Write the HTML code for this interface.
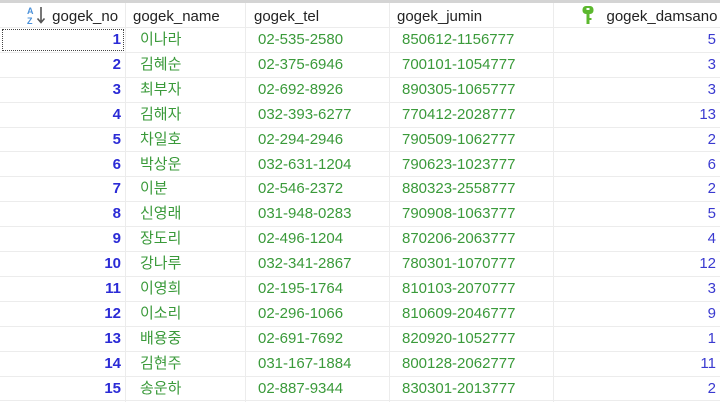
<!DOCTYPE html>
<html><head><meta charset="utf-8"><style>
*{margin:0;padding:0;box-sizing:border-box}
body{width:720px;height:402px;overflow:hidden;background:#fff;font-family:"Liberation Sans","Noto Sans CJK KR",sans-serif;font-size:15px;position:relative}
.top{position:absolute;left:0;top:0;width:720px;height:3px;background:#d4d4d4}
.hd{position:absolute;top:3px;height:25px;line-height:27px;color:#222;font-size:15px}
.vl{position:absolute;top:3px;width:1px;height:399px;background:#ececec}
.row{position:absolute;left:0;width:720px;height:24.9px;border-bottom:1px solid #ececec}
.c{position:absolute;top:0;line-height:24px;white-space:nowrap}
.no{left:0;width:121px;text-align:right;color:#2b2bd6;font-weight:bold}
.nm{left:140px;color:#3a9a3a}
.tl{left:258px;color:#3a9a3a}
.jm{left:402px;color:#3a9a3a}
.dm{left:553px;width:163px;text-align:right;color:#3a3ad0}
.focus{position:absolute;left:2px;top:29px;width:122px;height:22px;border:1px dotted #444}
</style></head><body>
<div class="top"></div>
<div class="hd" style="left:26px;width:98px;"><svg width="22" height="20" style="vertical-align:-4px" viewBox="0 0 22 20"><text x="1" y="9" font-size="9" fill="#4a90d9" font-family="Liberation Sans" font-weight="bold">A</text><text x="1" y="19" font-size="9" fill="#4a90d9" font-family="Liberation Sans" font-weight="bold">Z</text><path d="M15 2 V17 M11.5 13.5 L15 17.5 L18.5 13.5" stroke="#555" stroke-width="1.6" fill="none"/></svg> gogek_no</div>
<div class="hd" style="left:133px">gogek_name</div>
<div class="hd" style="left:254px">gogek_tel</div>
<div class="hd" style="left:397px">gogek_jumin</div>
<div class="hd" style="left:582px"><svg width="12" height="20" style="vertical-align:-4px" viewBox="0 0 12 20"><rect x="0.5" y="1" width="11" height="8" rx="3.5" fill="#5cb82e"/><rect x="4.5" y="3" width="3" height="2" fill="#fff"/><rect x="4.5" y="8" width="3" height="11" fill="#5cb82e"/><rect x="7" y="13" width="2.5" height="2" fill="#5cb82e"/></svg> &nbsp;&nbsp;gogek_damsano</div>
<div class="vl" style="left:125px"></div>
<div class="vl" style="left:245px"></div>
<div class="vl" style="left:389px"></div>
<div class="vl" style="left:553px"></div>
<div class="row" style="top:3px;height:25px"></div>
<div class="row" style="top:28px"><span class="c no">1</span><span class="c nm">이나라</span><span class="c tl">02-535-2580</span><span class="c jm">850612-1156777</span><span class="c dm">5</span></div>
<div class="row" style="top:52.9px"><span class="c no">2</span><span class="c nm">김혜순</span><span class="c tl">02-375-6946</span><span class="c jm">700101-1054777</span><span class="c dm">3</span></div>
<div class="row" style="top:77.8px"><span class="c no">3</span><span class="c nm">최부자</span><span class="c tl">02-692-8926</span><span class="c jm">890305-1065777</span><span class="c dm">3</span></div>
<div class="row" style="top:102.7px"><span class="c no">4</span><span class="c nm">김해자</span><span class="c tl">032-393-6277</span><span class="c jm">770412-2028777</span><span class="c dm">13</span></div>
<div class="row" style="top:127.6px"><span class="c no">5</span><span class="c nm">차일호</span><span class="c tl">02-294-2946</span><span class="c jm">790509-1062777</span><span class="c dm">2</span></div>
<div class="row" style="top:152.5px"><span class="c no">6</span><span class="c nm">박상운</span><span class="c tl">032-631-1204</span><span class="c jm">790623-1023777</span><span class="c dm">6</span></div>
<div class="row" style="top:177.4px"><span class="c no">7</span><span class="c nm">이분</span><span class="c tl">02-546-2372</span><span class="c jm">880323-2558777</span><span class="c dm">2</span></div>
<div class="row" style="top:202.3px"><span class="c no">8</span><span class="c nm">신영래</span><span class="c tl">031-948-0283</span><span class="c jm">790908-1063777</span><span class="c dm">5</span></div>
<div class="row" style="top:227.2px"><span class="c no">9</span><span class="c nm">장도리</span><span class="c tl">02-496-1204</span><span class="c jm">870206-2063777</span><span class="c dm">4</span></div>
<div class="row" style="top:252.1px"><span class="c no">10</span><span class="c nm">강나루</span><span class="c tl">032-341-2867</span><span class="c jm">780301-1070777</span><span class="c dm">12</span></div>
<div class="row" style="top:277px"><span class="c no">11</span><span class="c nm">이영희</span><span class="c tl">02-195-1764</span><span class="c jm">810103-2070777</span><span class="c dm">3</span></div>
<div class="row" style="top:301.9px"><span class="c no">12</span><span class="c nm">이소리</span><span class="c tl">02-296-1066</span><span class="c jm">810609-2046777</span><span class="c dm">9</span></div>
<div class="row" style="top:326.8px"><span class="c no">13</span><span class="c nm">배용중</span><span class="c tl">02-691-7692</span><span class="c jm">820920-1052777</span><span class="c dm">1</span></div>
<div class="row" style="top:351.7px"><span class="c no">14</span><span class="c nm">김현주</span><span class="c tl">031-167-1884</span><span class="c jm">800128-2062777</span><span class="c dm">11</span></div>
<div class="row" style="top:376.6px"><span class="c no">15</span><span class="c nm">송운하</span><span class="c tl">02-887-9344</span><span class="c jm">830301-2013777</span><span class="c dm">2</span></div>
<div class="focus"></div>
</body></html>
